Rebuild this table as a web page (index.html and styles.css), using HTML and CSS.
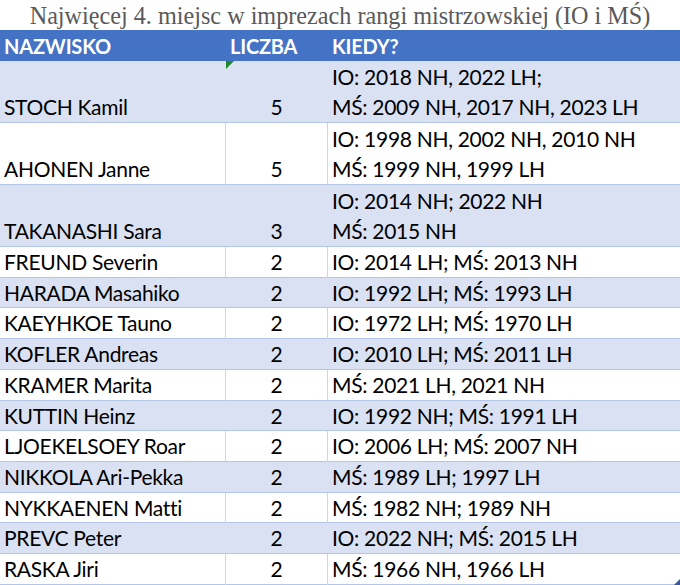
FILE: index.html
```html
<!DOCTYPE html>
<html lang="pl">
<head>
<meta charset="utf-8">
<title>Najwięcej 4. miejsc</title>
<link rel="stylesheet" href="styles.css">
</head>
<body>
<div class="sheet">
  <h1 class="title">Najwięcej 4. miejsc w imprezach rangi mistrzowskiej (IO i MŚ)</h1>
  <div class="table">
    <div class="row head">
      <div class="c name">NAZWISKO</div>
      <div class="c num">LICZBA</div>
      <div class="c when">KIEDY?</div>
    </div>
    <div class="row band tall">
      <div class="c name">STOCH Kamil</div>
      <div class="c num">5<span class="flag"></span></div>
      <div class="c when"><span>IO: 2018 NH, 2022 LH;</span><span>MŚ: 2009 NH, 2017 NH, 2023 LH</span></div>
    </div>
    <div class="row tall">
      <div class="c name">AHONEN Janne</div>
      <div class="c num">5</div>
      <div class="c when"><span>IO: 1998 NH, 2002 NH, 2010 NH</span><span>MŚ: 1999 NH, 1999 LH</span></div>
    </div>
    <div class="row band tall">
      <div class="c name">TAKANASHI Sara</div>
      <div class="c num">3</div>
      <div class="c when"><span>IO: 2014 NH; 2022 NH</span><span>MŚ: 2015 NH</span></div>
    </div>
    <div class="row">
      <div class="c name">FREUND Severin</div>
      <div class="c num">2</div>
      <div class="c when">IO: 2014 LH; MŚ: 2013 NH</div>
    </div>
    <div class="row band">
      <div class="c name">HARADA Masahiko</div>
      <div class="c num">2</div>
      <div class="c when">IO: 1992 LH; MŚ: 1993 LH</div>
    </div>
    <div class="row">
      <div class="c name">KAEYHKOE Tauno</div>
      <div class="c num">2</div>
      <div class="c when">IO: 1972 LH; MŚ: 1970 LH</div>
    </div>
    <div class="row band">
      <div class="c name">KOFLER Andreas</div>
      <div class="c num">2</div>
      <div class="c when">IO: 2010 LH; MŚ: 2011 LH</div>
    </div>
    <div class="row">
      <div class="c name">KRAMER Marita</div>
      <div class="c num">2</div>
      <div class="c when">MŚ: 2021 LH, 2021 NH</div>
    </div>
    <div class="row band">
      <div class="c name">KUTTIN Heinz</div>
      <div class="c num">2</div>
      <div class="c when">IO: 1992 NH; MŚ: 1991 LH</div>
    </div>
    <div class="row">
      <div class="c name">LJOEKELSOEY Roar</div>
      <div class="c num">2</div>
      <div class="c when">IO: 2006 LH; MŚ: 2007 NH</div>
    </div>
    <div class="row band">
      <div class="c name">NIKKOLA Ari-Pekka</div>
      <div class="c num">2</div>
      <div class="c when">MŚ: 1989 LH; 1997 LH</div>
    </div>
    <div class="row">
      <div class="c name">NYKKAENEN Matti</div>
      <div class="c num">2</div>
      <div class="c when">MŚ: 1982 NH; 1989 NH</div>
    </div>
    <div class="row band">
      <div class="c name">PREVC Peter</div>
      <div class="c num">2</div>
      <div class="c when">IO: 2022 NH; MŚ: 2015 LH</div>
    </div>
    <div class="row">
      <div class="c name">RASKA Jiri</div>
      <div class="c num">2</div>
      <div class="c when">MŚ: 1966 NH, 1966 LH</div>
    </div>
  </div>
  <span class="handle"></span>
</div>
</body>
</html>
```

FILE: styles.css
```css
html, body {
  margin: 0;
  padding: 0;
  background: #ffffff;
}

.sheet {
  position: relative;
  width: 680px;
  height: 585px;
  overflow: hidden;
  background: #ffffff;
}

.title {
  margin: 0;
  height: 30px;
  line-height: 32px;
  font-family: "Liberation Serif", serif;
  font-weight: normal;
  font-size: 24.2px;
  color: #595959;
  text-align: center;
  white-space: nowrap;
}

.table {
  display: flex;
  flex-direction: column;
  font-family: "Lato", sans-serif;
  font-size: 21px;
  letter-spacing: -0.3px;
  color: #000000;
}

.row {
  display: grid;
  grid-template-columns: 226px 102px 1fr;
  height: 30.73px;
  box-sizing: border-box;
  border-bottom: 1px solid #b4c6e7;
  background: #ffffff;
  flex: none;
}

.row.tall {
  height: 62px;
}

.row.band {
  background: #d9e1f2;
}

.row.head {
  height: 31px;
  background: #4472c4;
  color: #ffffff;
  font-weight: 700;
  font-size: 20px;
  letter-spacing: -0.2px;
  border-bottom: none;
}

.c {
  display: flex;
  flex-direction: column;
  justify-content: flex-end;
  line-height: 30.7px;
  white-space: nowrap;
  position: relative;
  margin-bottom: -1px;
}

.row .name,
.row .num {
  border-right: 1px solid #d4d4d4;
}

.row.band .name,
.row.band .num,
.row.head .name,
.row.head .num {
  border-right-color: transparent;
}

.name {
  padding-left: 4px;
}

.num {
  text-align: center;
}

.head .num {
  text-align: left;
  padding-left: 4px;
}

.when {
  padding-left: 4px;
}

.flag {
  position: absolute;
  left: 0;
  top: 0;
  width: 0;
  height: 0;
  border-top: 8px solid #1d8a2a;
  border-right: 8px solid transparent;
}

.handle {
  position: absolute;
  right: 0;
  bottom: 0;
  width: 0;
  height: 0;
  border-bottom: 6px solid #3b5998;
  border-left: 6px solid transparent;
}
```
